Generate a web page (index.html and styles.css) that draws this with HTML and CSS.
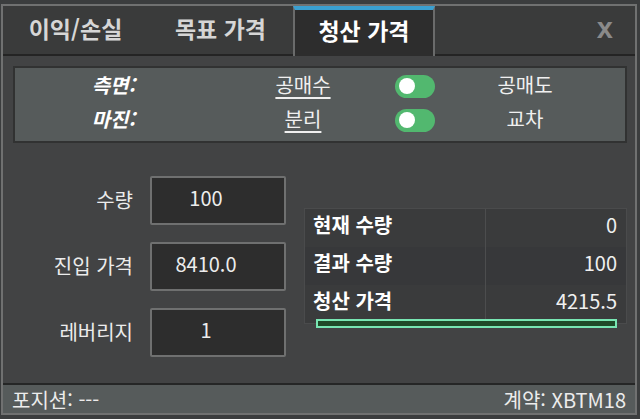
FILE: index.html
```html
<!DOCTYPE html>
<html lang="ko">
<head>
<meta charset="utf-8">
<link rel="stylesheet" href="styles.css">
</head>
<body>
<div class="window">
  <div class="tabbar">
    <div class="tab">이익/손실</div>
    <div class="tab">목표 가격</div>
    <div class="tab active">청산 가격</div>
    <div class="tab-rest"><span class="close">x</span></div>
  </div>
  <div class="content">
    <div class="options">
      <div class="opt-label r1">측면:</div>
      <div class="opt-a r1">공매수</div>
      <div class="toggle r1"><span class="knob"></span></div>
      <div class="opt-b r1">공매도</div>
      <div class="opt-label r2">마진:</div>
      <div class="opt-a r2">분리</div>
      <div class="toggle r2"><span class="knob"></span></div>
      <div class="opt-b r2">교차</div>
    </div>
    <div class="main">
      <div class="fields">
        <div class="field"><label class="field-label">수량</label><div class="input">100</div></div>
        <div class="field"><label class="field-label">진입 가격</label><div class="input">8410.0</div></div>
        <div class="field"><label class="field-label">레버리지</label><div class="input">1</div></div>
      </div>
      <div class="result">
        <div class="table">
          <div class="row"><div class="cell key">현재 수량</div><div class="cell val">0</div></div>
          <div class="row alt"><div class="cell key">결과 수량</div><div class="cell val">100</div></div>
          <div class="row"><div class="cell key">청산 가격</div><div class="cell val">4215.5</div></div>
        </div>
        <div class="bar"></div>
      </div>
    </div>
  </div>
  <div class="footer">
    <span>포지션: ---</span>
    <span>계약: XBTM18</span>
  </div>
</div>
</body>
</html>
```
FILE: styles.css
```css
html, body {
  margin: 0;
  padding: 0;
  background: #3b3d3e;
  width: 640px;
  height: 419px;
  overflow: hidden;
  font-family: "Noto Sans CJK KR", "Noto Sans", sans-serif;
  color: #e6e6e6;
}

.window {
  margin: 4px 0 0 1px;
  width: 632px;
  height: 407px;
  border: 2px solid #707171;
  display: flex;
  flex-direction: column;
  background: #424344;
}

.tabbar {
  display: flex;
  height: 50px;
  background: #3a3b3b;
  flex-shrink: 0;
}

.tab {
  width: 145px;
  display: flex;
  align-items: center;
  justify-content: center;
  font-size: 23px;
  font-weight: 700;
  color: #d6d6d6;
  border-bottom: 2px solid #242424;
  box-sizing: border-box;
  padding-bottom: 4px;
}

.tab.active {
  width: 142px;
  background: #2d2d2d;
  color: #ffffff;
  border-top: 4px solid #3a9fd0;
  border-left: 2px solid #6a6b6b;
  border-right: 2px solid #6a6b6b;
  border-bottom: none;
  padding-bottom: 6px;
}

.tab-rest {
  flex: 1;
  display: flex;
  align-items: center;
  justify-content: flex-end;
  padding-right: 22px;
  border-bottom: 2px solid #242424;
}

.close {
  font-family: "Liberation Sans", sans-serif;
  font-weight: 700;
  font-size: 29px;
  color: #8a8a8a;
  line-height: 1;
  margin-top: -4px;
}

.content {
  flex: 1;
  padding: 10px 8px 0 10px;
  display: flex;
  flex-direction: column;
}

.options {
  background: #565b5b;
  border: 2px solid #313232;
  display: grid;
  grid-template-columns: 120px 98px 140px 22px 40px 30px 120px;
  grid-template-rows: 34px 34px;
  padding-top: 1px;
  box-sizing: border-box;
  height: 77px;
  align-items: center;
  font-size: 20px;
}

.r1 { grid-row: 1; }
.r2 { grid-row: 2; }

.opt-label {
  grid-column: 1;
  text-align: right;
  font-weight: 700;
  font-style: italic;
  color: #ffffff;
  padding-bottom: 4px;
}

.opt-a {
  grid-column: 3;
  text-align: center;
  text-decoration: underline;
  text-underline-offset: 4px;
  color: #f0f0f0;
  padding-bottom: 4px;
}

.toggle {
  grid-column: 5;
  width: 40px;
  height: 23px;
  border-radius: 12px;
  background: #52b86f;
  display: flex;
  align-items: center;
  padding-left: 4px;
  box-sizing: border-box;
}

.knob {
  width: 16px;
  height: 16px;
  border-radius: 50%;
  background: #ffffff;
}

.opt-b {
  grid-column: 7;
  text-align: center;
  color: #f0f0f0;
  padding-bottom: 4px;
}

.main {
  flex: 1;
  display: flex;
  gap: 18px;
}

.fields {
  display: flex;
  flex-direction: column;
  gap: 17px;
  margin-top: 33px;
}

.field {
  display: flex;
  align-items: center;
  gap: 17px;
}

.field-label {
  width: 120px;
  text-align: right;
  font-size: 20px;
  color: #ececec;
  padding-bottom: 3px;
}

.input {
  width: 136px;
  height: 49px;
  box-sizing: border-box;
  background: #2d2d2d;
  border: 2px solid #6f7070;
  border-radius: 2px;
  display: flex;
  align-items: center;
  justify-content: center;
  padding-right: 24px;
  padding-bottom: 6px;
  font-size: 20px;
  color: #ececec;
}

.result {
  margin-top: 65px;
  width: 323px;
}

.table {
  border: 1px solid #4a4b4c;
  background: #393a3b;
}

.row {
  display: flex;
  height: 38px;
  align-items: center;
  background: #3a3b3c;
}

.row.alt {
  background: #37383a;
}

.cell {
  height: 100%;
  display: flex;
  align-items: center;
  font-size: 20px;
  box-sizing: border-box;
  padding-bottom: 7px;
}

.key {
  width: 181px;
  padding-left: 8px;
  font-weight: 700;
  color: #ffffff;
  border-right: 1px solid #4c4d4e;
}

.val {
  flex: 1;
  justify-content: flex-end;
  padding-right: 9px;
  color: #f0f0f0;
}

.bar {
  margin: -5px 0 0 12px;
  width: 301px;
  height: 9px;
  box-sizing: border-box;
  border: 2px solid #78e6b3;
  background: #1e4a28;
  position: relative;
}

.footer {
  height: 28px;
  flex-shrink: 0;
  border-top: 2px solid #252626;
  background: #565b5b;
  display: flex;
  align-items: center;
  justify-content: space-between;
  padding: 0 9px;
  font-size: 20px;
  color: #ececec;
}
```
